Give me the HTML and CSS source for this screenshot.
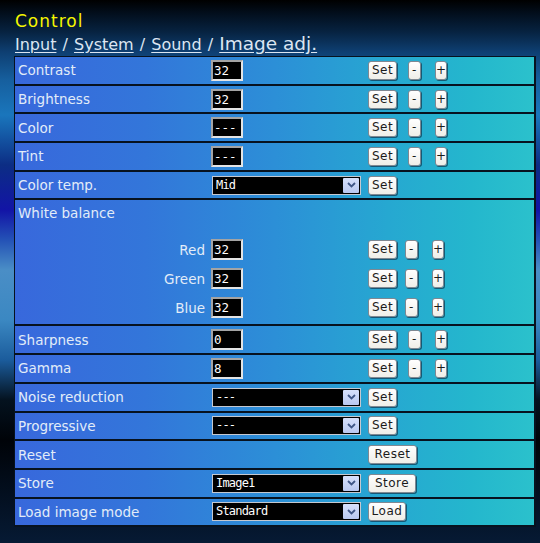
FILE: index.html
```html
<!DOCTYPE html>
<html lang="en">
<head>
<meta charset="utf-8">
<title>Control - Image adj.</title>
<link rel="stylesheet" href="styles.css">
</head>
<body>
<div class="page">
  <div class="title">Control</div>
  <div class="crumbs"><a href="#">Input</a> / <a href="#">System</a> / <a href="#">Sound</a> / <a href="#" class="current">Image adj.</a></div>
  <div class="panel">
    <div class="row">
      <span class="label">Contrast</span>
      <span class="val"><input class="num" type="text" value="32"></span>
      <span class="btns"><button class="btn set">Set</button><button class="btn minus">-</button><button class="btn plus">+</button></span>
    </div>
    <div class="row">
      <span class="label">Brightness</span>
      <span class="val"><input class="num" type="text" value="32"></span>
      <span class="btns"><button class="btn set">Set</button><button class="btn minus">-</button><button class="btn plus">+</button></span>
    </div>
    <div class="row">
      <span class="label">Color</span>
      <span class="val"><input class="num" type="text" value="---"></span>
      <span class="btns"><button class="btn set">Set</button><button class="btn minus">-</button><button class="btn plus">+</button></span>
    </div>
    <div class="row">
      <span class="label">Tint</span>
      <span class="val"><input class="num" type="text" value="---"></span>
      <span class="btns"><button class="btn set">Set</button><button class="btn minus">-</button><button class="btn plus">+</button></span>
    </div>
    <div class="row">
      <span class="label">Color temp.</span>
      <span class="val"><span class="select"><span class="sel-text">Mid</span><span class="arrow"><svg width="9" height="6" viewBox="0 0 9 6"><path d="M1 1 L4.5 4.5 L8 1" fill="none" stroke="#3f5686" stroke-width="1.8"/></svg></span></span></span>
      <span class="btns"><button class="btn set">Set</button></span>
    </div>
    <div class="row wb">
      <div class="wb-head label">White balance</div>
      <div class="sub">
        <span class="label">Red</span>
        <span class="val"><input class="num" type="text" value="32"></span>
        <span class="btns"><button class="btn set">Set</button><button class="btn minus">-</button><button class="btn plus">+</button></span>
      </div>
      <div class="sub">
        <span class="label">Green</span>
        <span class="val"><input class="num" type="text" value="32"></span>
        <span class="btns"><button class="btn set">Set</button><button class="btn minus">-</button><button class="btn plus">+</button></span>
      </div>
      <div class="sub">
        <span class="label">Blue</span>
        <span class="val"><input class="num" type="text" value="32"></span>
        <span class="btns"><button class="btn set">Set</button><button class="btn minus">-</button><button class="btn plus">+</button></span>
      </div>
    </div>
    <div class="row">
      <span class="label">Sharpness</span>
      <span class="val"><input class="num" type="text" value="0"></span>
      <span class="btns"><button class="btn set">Set</button><button class="btn minus">-</button><button class="btn plus">+</button></span>
    </div>
    <div class="row">
      <span class="label">Gamma</span>
      <span class="val"><input class="num" type="text" value="8"></span>
      <span class="btns"><button class="btn set">Set</button><button class="btn minus">-</button><button class="btn plus">+</button></span>
    </div>
    <div class="row">
      <span class="label">Noise reduction</span>
      <span class="val"><span class="select"><span class="sel-text">---</span><span class="arrow"><svg width="9" height="6" viewBox="0 0 9 6"><path d="M1 1 L4.5 4.5 L8 1" fill="none" stroke="#3f5686" stroke-width="1.8"/></svg></span></span></span>
      <span class="btns"><button class="btn set">Set</button></span>
    </div>
    <div class="row">
      <span class="label">Progressive</span>
      <span class="val"><span class="select"><span class="sel-text">---</span><span class="arrow"><svg width="9" height="6" viewBox="0 0 9 6"><path d="M1 1 L4.5 4.5 L8 1" fill="none" stroke="#3f5686" stroke-width="1.8"/></svg></span></span></span>
      <span class="btns"><button class="btn set">Set</button></span>
    </div>
    <div class="row">
      <span class="label">Reset</span>
      <span class="val"></span>
      <span class="btns"><button class="btn reset">Reset</button></span>
    </div>
    <div class="row">
      <span class="label">Store</span>
      <span class="val"><span class="select"><span class="sel-text">Image1</span><span class="arrow"><svg width="9" height="6" viewBox="0 0 9 6"><path d="M1 1 L4.5 4.5 L8 1" fill="none" stroke="#3f5686" stroke-width="1.8"/></svg></span></span></span>
      <span class="btns"><button class="btn store">Store</button></span>
    </div>
    <div class="row">
      <span class="label">Load image mode</span>
      <span class="val"><span class="select"><span class="sel-text">Standard</span><span class="arrow"><svg width="9" height="6" viewBox="0 0 9 6"><path d="M1 1 L4.5 4.5 L8 1" fill="none" stroke="#3f5686" stroke-width="1.8"/></svg></span></span></span>
      <span class="btns"><button class="btn load">Load</button></span>
    </div>
  </div>
</div>
</body>
</html>
```
FILE: styles.css
```css
html, body {
  margin: 0;
  height: 543px;
}
body {
  font-family: "DejaVu Sans", sans-serif;
  background: linear-gradient(to bottom,
    #000000 0px, #020d1a 12px, #072341 32px, #0e3f72 52px,
    #165f9e 80px, #1a76bc 115px, #0c2d84 165px, #1214a6 210px,
    #2452b6 240px, #4a8ec6 270px, #3b88c2 320px, #1b5c9c 360px,
    #04121f 400px, #000308 440px, #061a34 543px);
}
.page {
  box-sizing: border-box;
  height: 543px;
  padding: 11px 4px 0 14px;
}
.title {
  height: 20px;
  line-height: 20px;
  padding-left: 1px;
  font-size: 17px;
  letter-spacing: 1px;
  color: #f6f600;
}
.crumbs {
  height: 25px;
  line-height: 25px;
  padding-left: 1px;
  font-size: 16px;
  word-spacing: 1px;
  color: #dce6f2;
  white-space: nowrap;
}
.crumbs a {
  color: inherit;
  text-decoration: underline;
  text-underline-offset: 2px;
}
.crumbs .current {
  font-size: 18.5px;
  word-spacing: 0;
}
.panel {
  box-sizing: border-box;
  width: 522px;
  border: 1px solid #07121f;
  border-right-width: 2px;
  border-bottom: 0;
  background: linear-gradient(90deg, #3868dc 0%, #3376da 25%, #2c8fd7 50%, #26a8d1 72%, #24b7cd 88%, #2bc1cc 100%);
}
.row {
  display: grid;
  grid-template-columns: 196px 157px 1fr;
  align-items: center;
  height: 26.7px;
  border-bottom: 2px solid #07121f;
}
.label {
  padding-left: 3px;
  font-size: 13.5px;
  color: #e2ecf8;
  white-space: nowrap;
}
.row.wb {
  display: block;
  height: 124px;
}
.wb-head {
  height: 27px;
  line-height: 27px;
  padding-bottom: 8px;
}
.sub {
  display: grid;
  grid-template-columns: 196px 157px 1fr;
  align-items: center;
  height: 29px;
}
.sub .label {
  text-align: right;
  padding: 0 6px 0 0;
}
.val {
  display: flex;
  align-items: center;
}
.num {
  box-sizing: border-box;
  width: 32px;
  height: 21px;
  margin: 0;
  padding: 0 0 0 1px;
  background: #000;
  color: #fff;
  border: 2px solid;
  border-color: #a4a4a4 #e4e4e4 #e4e4e4 #a4a4a4;
  font: 12.5px "DejaVu Sans Mono", monospace;
  outline: none;
}
.select {
  box-sizing: border-box;
  display: flex;
  width: 149px;
  height: 19px;
  margin-left: 1px;
  background: #000;
  border: 1px solid #c4c8d0;
}
.sel-text {
  flex: 1;
  padding-left: 3px;
  font: 12px/17px "DejaVu Sans Mono", monospace;
  letter-spacing: -0.8px;
  color: #fff;
}
.arrow {
  display: flex;
  align-items: center;
  justify-content: center;
  width: 16px;
  margin: 1px;
  background: linear-gradient(#d6e0fb, #b9c8f0);
  border-radius: 1px;
}
.btns {
  display: flex;
  align-items: center;
}
.btn {
  box-sizing: border-box;
  height: 19px;
  margin: 0;
  padding: 0;
  border: 1px solid #7f8892;
  border-radius: 3px;
  background: linear-gradient(#ffffff, #efeee8);
  box-shadow: 1px 1px 0 rgba(10, 20, 40, 0.55);
  color: #1b1b1b;
  font: 12px/17px "DejaVu Sans", sans-serif;
  letter-spacing: 0.5px;
  text-align: center;
}
.set { width: 29px; }
.minus { width: 13px; margin-left: 11px; }
.plus { width: 12px; margin-left: 14px; }
.sub .minus { margin-left: 8px; }
.reset { width: 49px; }
.store { width: 48px; }
.load { width: 38px; }
```
